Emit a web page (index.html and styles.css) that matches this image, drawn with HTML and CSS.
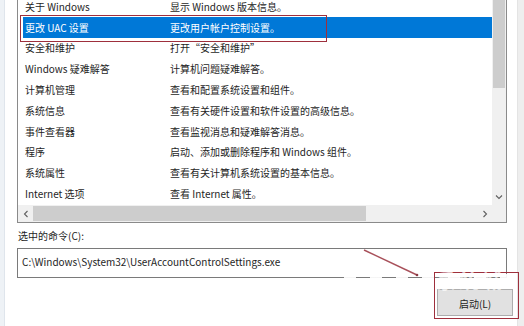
FILE: index.html
```html
<!DOCTYPE html>
<html lang="zh-CN">
<head>
<meta charset="utf-8">
<title>系统配置 - 工具</title>
<link rel="stylesheet" href="styles.css">
</head>
<body>
<div class="screen">
  <div class="edge-left"></div>
  <div class="main">
    <div class="listbox">
      <div class="list-area">
        <div class="rows">
          <div class="rows-inner">
            <div class="row"><span class="c1">关于 Windows</span><span class="c2">显示 Windows 版本信息。</span></div>
            <div class="row sel"><span class="c1">更改 UAC 设置</span><span class="c2">更改用户帐户控制设置。</span></div>
            <div class="row"><span class="c1">安全和维护</span><span class="c2">打开“安全和维护”</span></div>
            <div class="row"><span class="c1">Windows 疑难解答</span><span class="c2">计算机问题疑难解答。</span></div>
            <div class="row"><span class="c1">计算机管理</span><span class="c2">查看和配置系统设置和组件。</span></div>
            <div class="row"><span class="c1">系统信息</span><span class="c2">查看有关硬件设置和软件设置的高级信息。</span></div>
            <div class="row"><span class="c1">事件查看器</span><span class="c2">查看监视消息和疑难解答消息。</span></div>
            <div class="row"><span class="c1">程序</span><span class="c2">启动、添加或删除程序和 Windows 组件。</span></div>
            <div class="row"><span class="c1">系统属性</span><span class="c2">查看有关计算机系统设置的基本信息。</span></div>
            <div class="row"><span class="c1">Internet 选项</span><span class="c2">查看 Internet 属性。</span></div>
          </div>
        </div>
        <div class="vscroll">
          <div class="vthumb"></div>
          <div class="vtrack"></div>
          <div class="sb-btn">
            <svg width="8" height="6" viewBox="0 0 8 6"><path d="M1 1.5 L4 4.5 L7 1.5" fill="none" stroke="#606060" stroke-width="1.1"/></svg>
          </div>
        </div>
      </div>
      <div class="hscroll">
        <div class="sb-btn h">
          <svg width="6" height="8" viewBox="0 0 6 8"><path d="M4.5 1 L1.5 4 L4.5 7" fill="none" stroke="#606060" stroke-width="1.1"/></svg>
        </div>
        <div class="hthumb"></div>
        <div class="htrack"></div>
        <div class="sb-btn h">
          <svg width="6" height="8" viewBox="0 0 6 8"><path d="M1.5 1 L4.5 4 L1.5 7" fill="none" stroke="#606060" stroke-width="1.1"/></svg>
        </div>
        <div class="corner"></div>
      </div>
    </div>
    <div class="label">选中的命令(C):</div>
    <div class="textbox">C:\Windows\System32\UserAccountControlSettings.exe</div>
    <div class="btn-row"><button class="btn">启动(L)</button></div>
  </div>
  <div class="edge-right"></div>

  <div class="mark mark-row"></div>
  <div class="wm-band"></div>
  <div class="mark mark-btn"></div>
  <svg class="pointer" width="524" height="326" viewBox="0 0 524 326">
    <path d="M364 250 L417 275" stroke="#a8505a" stroke-width="1.4" fill="none"/>
    <circle cx="417" cy="275" r="1.3" fill="#8a3a44"/>
  </svg>
  <div class="watermark">系统城</div>
</div>
</body>
</html>
```

FILE: styles.css
```css
* {
  box-sizing: border-box;
  margin: 0;
  padding: 0;
}

html, body {
  width: 524px;
  height: 326px;
  overflow: hidden;
  background: #fff;
}

body {
  font-family: "Noto Sans CJK SC", "Noto Sans", sans-serif;
  font-size: 10px;
  color: #1e1e1e;
}

.screen {
  position: relative;
  display: flex;
  width: 524px;
  height: 326px;
}

.edge-left {
  width: 5px;
  background: #eef2f6;
  border-right: 1px solid #dfe5ec;
}

.main {
  width: 512px;
  padding: 0 10px 0 12px;
  background: #fff;
}

.edge-right {
  flex: 1;
  background: #eeeeee;
  border-left: 1px solid #e4e4e4;
}

.listbox {
  margin-top: -1px;
  border: 1px solid #8a8a8a;
}

.list-area {
  display: flex;
  height: 205px;
  padding-top: 1px;
}

.rows {
  flex: 1;
  overflow: hidden;
  padding-left: 5px;
}

.rows-inner {
  margin-top: -5px;
}

.row {
  display: flex;
  align-items: center;
  height: 20.8px;
  padding-left: 2px;
  white-space: nowrap;
}

.row.sel {
  background: #0078d7;
  color: #fff;
}

.c1 {
  width: 145px;
  flex: none;
}

.vscroll {
  width: 14px;
  margin-top: -1px;
  display: flex;
  flex-direction: column;
  background: #f0f0f0;
}

.vthumb {
  height: 88px;
  margin: 0 1px;
  background: #cdcdcd;
}

.vtrack {
  flex: 1;
}

.sb-btn {
  height: 17px;
  display: flex;
  align-items: center;
  justify-content: center;
}

.sb-btn.h {
  width: 15px;
  height: auto;
}

.hscroll {
  display: flex;
  height: 17px;
  background: #f0f0f0;
}

.hthumb {
  width: 333px;
  margin: 1px 0;
  background: #cdcdcd;
}

.htrack {
  flex: 1;
}

.corner {
  width: 14px;
  background: #f0f0f0;
}

.label {
  margin-top: 6px;
  padding-left: 1px;
  line-height: 14px;
}

.textbox {
  margin-top: 5px;
  height: 30px;
  border: 1px solid #7a7a7a;
  padding-left: 4px;
  line-height: 25px;
  white-space: nowrap;
}

.btn-row {
  display: flex;
  justify-content: flex-end;
  margin-top: 11px;
  margin-right: -6px;
}

.btn {
  width: 76px;
  height: 27px;
  background: #e1e1e1;
  border: 1px solid #adadad;
  font-family: inherit;
  font-size: 10px;
  color: #1e1e1e;
  padding-top: 1px;
}

.mark {
  position: absolute;
  border: 1.5px solid #9e2f3c;
}

.mark-row {
  left: 20px;
  top: 15px;
  width: 307px;
  height: 27px;
}

.mark-btn {
  left: 434px;
  top: 272px;
  width: 85px;
  height: 47px;
}

.wm-band {
  position: absolute;
  left: 330px;
  top: 274px;
  width: 180px;
  height: 5px;
  background: repeating-linear-gradient(90deg, transparent 0 14px, rgba(255, 255, 255, 0.92) 14px 26px);
}

.pointer {
  position: absolute;
  left: 0;
  top: 0;
}

.watermark {
  position: absolute;
  left: 436px;
  top: 270px;
  font-size: 20px;
  font-weight: 700;
  line-height: 22px;
  letter-spacing: 3px;
  color: rgba(255, 255, 255, 0.7);
  pointer-events: none;
}
```
